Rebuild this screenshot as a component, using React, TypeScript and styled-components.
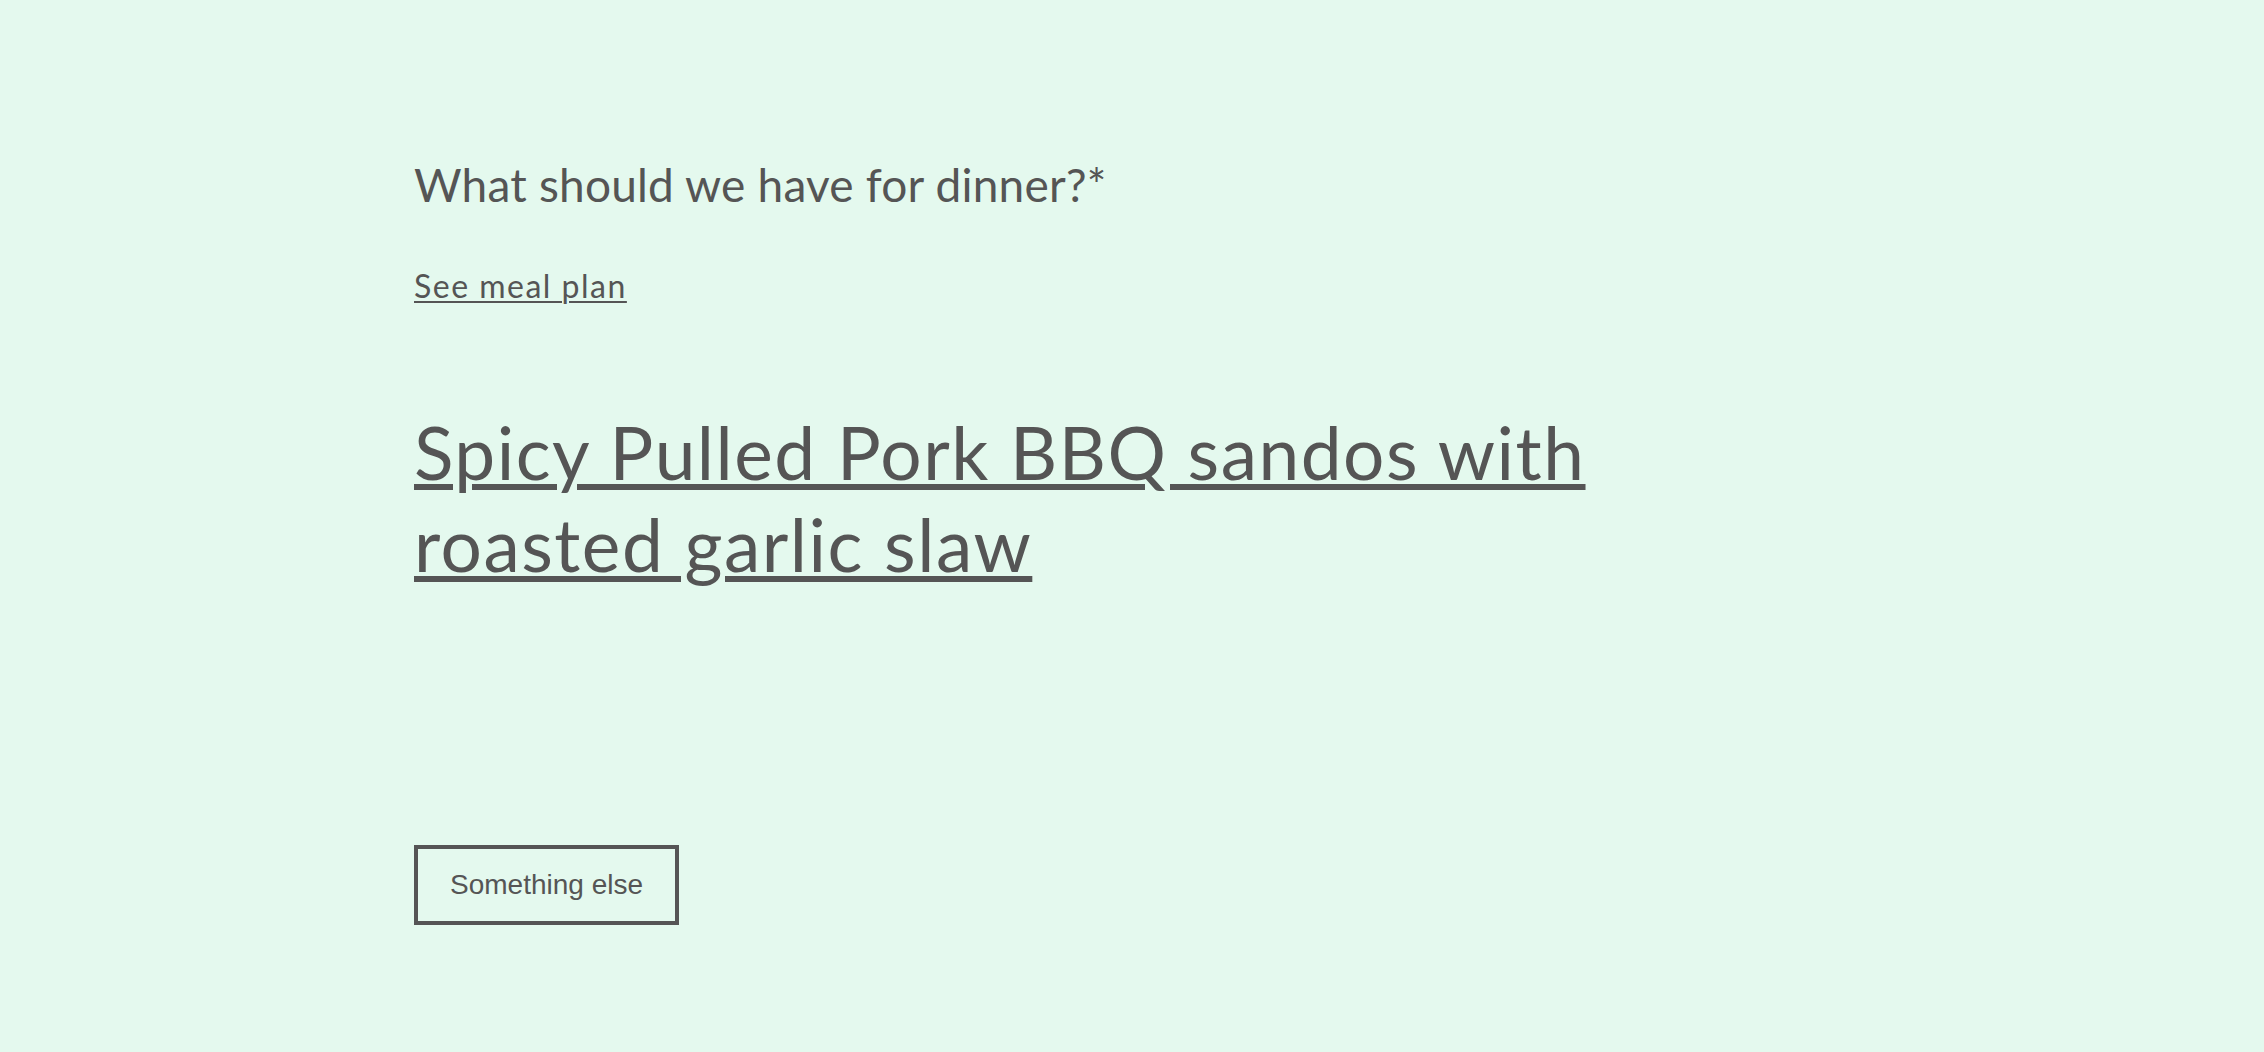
import React from 'react';
import styled, { createGlobalStyle } from 'styled-components';

const GlobalStyle = createGlobalStyle`
	html, body {
		margin: 0;
		padding: 0;
		background-color: #e4f9ee;
		min-height: 100vh;
	}

	body {
		font-family: Lato, "Liberation Sans", Arial, sans-serif;
		color: #555555;
	}
`;

const App = () => {
	return (
		<>
			<GlobalStyle />
			<Page>
				<Question>What should we have for dinner?*</Question>
				<PlanLink href="#">See meal plan</PlanLink>
				<Suggestion>
					<a href="#">Spicy Pulled Pork BBQ sandos with roasted garlic slaw</a>
				</Suggestion>
				<ActionRow>
					<OutlineButton type="button">Something else</OutlineButton>
				</ActionRow>
			</Page>
		</>
	);
};

export default App;

const Page = styled.main`
	display: flex;
	flex-direction: column;
	align-items: flex-start;
	padding: 157px 0 60px 414px;
	box-sizing: border-box;
	min-height: 100vh;
`;

const Question = styled.h2`
	margin: 0;
	font-family: Lato, "Liberation Sans", sans-serif;
	font-weight: 400;
	font-size: 46px;
	line-height: 56px;
	letter-spacing: 0.2px;
	color: #555555;
`;

const PlanLink = styled.a`
	margin-top: 53px;
	font-size: 32px;
	line-height: 40px;
	letter-spacing: 1.5px;
	color: #555555;
	text-decoration: underline;
	text-decoration-thickness: 2px;
	text-underline-offset: 3px;
`;

const Suggestion = styled.h1`
	margin: 100px 0 0;
	max-width: 1240px;
	font-weight: 400;
	font-size: 73px;
	line-height: 92px;
	letter-spacing: 1.5px;

	a {
		color: #555555;
		text-decoration: underline;
		text-decoration-thickness: 6px;
		text-underline-offset: 4px;
	}
`;

const ActionRow = styled.div`
	margin-top: 255px;
	display: flex;
`;

const OutlineButton = styled.button`
	background: transparent;
	border: 4px solid #555555;
	border-radius: 0;
	padding: 20px 32px 20px;
	font-family: "Liberation Sans", Arial, sans-serif;
	font-size: 28px;
	line-height: 32px;
	color: #555555;
	cursor: pointer;
`;
